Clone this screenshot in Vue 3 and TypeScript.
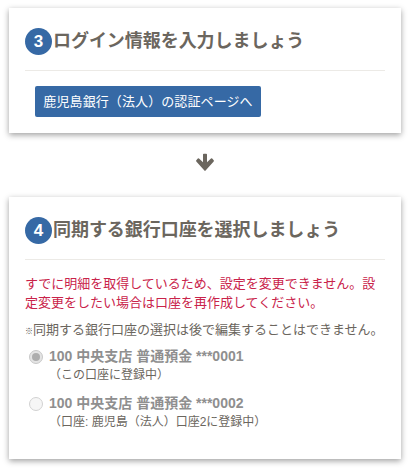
<script setup lang="ts">
interface Account { id: string; label: string; note: string; checked: boolean }
const accounts: Account[] = [
  { id: 'a1', label: '100 中央支店 普通預金 ***0001', note: '（この口座に登録中）', checked: true },
  { id: 'a2', label: '100 中央支店 普通預金 ***0002', note: '（口座: 鹿児島（法人）口座2に登録中）', checked: false },
]
</script>

<template>
  <div class="page">
    <section class="card card-top">
      <h2 class="head"><span class="num">3</span>ログイン情報を入力しましょう</h2>
      <a class="btn">鹿児島銀行（法人）の認証ページへ</a>
    </section>

    <div class="arrow">
      <svg width="20" height="20" viewBox="0 0 20 20">
        <path d="M8 1.6 Q8 .8 8.8 .8 H11.2 Q12 .8 12 1.6 V9.2 L16 5.6 Q16.6 5.1 17.2 5.6 L18.7 7.3 Q19.2 7.9 18.7 8.5 L10.6 17.6 Q10 18.2 9.4 17.6 L1.3 8.5 Q.8 7.9 1.3 7.3 L2.8 5.6 Q3.4 5.1 4 5.6 L8 9.2 Z" fill="#6b665e" />
      </svg>
    </div>

    <section class="card card-bottom">
      <h2 class="head"><span class="num">4</span>同期する銀行口座を選択しましょう</h2>
      <p class="err">すでに明細を取得しているため、設定を変更できません。設定変更をしたい場合は口座を再作成してください。</p>
      <p class="note"><span class="mark">※</span>同期する銀行口座の選択は後で編集することはできません。</p>
      <ul class="list">
        <li v-for="a in accounts" :key="a.id" class="item">
          <span class="radio" :class="{ on: a.checked }"></span>
          <div>
            <div class="label">{{ a.label }}</div>
            <div class="sub">{{ a.note }}</div>
          </div>
        </li>
      </ul>
    </section>
  </div>
</template>

<style>
html, body { margin: 0; background: #fff; }
</style>

<style scoped>
.page {
  width: 410px;
  height: 476px;
  padding: 8px 9px 0;
  box-sizing: border-box;
  overflow: hidden;
  font-family: "Liberation Sans", "Noto Sans CJK JP", sans-serif;
}
.card {
  background: #fff;
  box-shadow: 0 2px 6px rgba(0, 0, 0, 0.38);
  padding: 20px 16px 0;
  box-sizing: border-box;
  width: 392px;
}
.card-top { height: 125px; }
.card-bottom { height: 262px; }
.head {
  display: flex;
  align-items: center;
  margin: 0;
  height: 27px;
  padding-bottom: 15px;
  box-sizing: content-box;
  border-bottom: 1px solid #eceae6;
  font-size: 18px;
  font-weight: 700;
  line-height: 25px;
  color: #6b665e;
  letter-spacing: -0.05px;
  white-space: nowrap;
}
.num {
  flex: none;
  width: 27px;
  height: 27px;
  border-radius: 50%;
  background: #3669a5;
  color: #fff;
  display: flex;
  align-items: center;
  justify-content: center;
  font-size: 17px;
  letter-spacing: 0;
  margin-right: 1px;
}
.btn {
  display: inline-block;
  margin: 15px 0 0 10px;
  width: 226px;
  height: 31px;
  line-height: 31px;
  box-sizing: border-box;
  text-align: center;
  background: #3669a5;
  color: #fff;
  border-radius: 2px;
  font-size: 13px;
  letter-spacing: 0.1px;
  white-space: nowrap;
}
.arrow {
  height: 64px;
  display: flex;
  align-items: flex-start;
  justify-content: center;
  padding-top: 20px;
  box-sizing: border-box;
}
.err {
  margin: 14px 0 0;
  font-size: 13px;
  line-height: 19px;
  color: #c9234a;
}
.note {
  margin: 8px 0 0;
  font-size: 13px;
  line-height: 19px;
  color: #6b665e;
  white-space: nowrap;
}
.mark { font-size: 8px; font-weight: 700; color: #4f4b45; }
.list { list-style: none; margin: 6px 0 0; padding: 0; }
.item {
  display: flex;
  gap: 6px;
  padding-left: 4px;
  margin-bottom: 10px;
}
.radio {
  flex: none;
  width: 14px;
  height: 14px;
  margin-top: 3px;
  border-radius: 50%;
  box-sizing: border-box;
  border: 1px solid #d2d2d2;
  background: #f6f6f6;
  position: relative;
}
.radio.on { background: #e4e4e4; border-color: #c8c8c8; }
.radio.on::after {
  content: "";
  position: absolute;
  inset: 2px;
  border-radius: 50%;
  background: #adadad;
}
.label {
  font-size: 14px;
  line-height: 19px;
  font-weight: 700;
  color: #8f8f8f;
  white-space: nowrap;
}
.sub {
  font-size: 12px;
  line-height: 18px;
  color: #6b665e;
  white-space: nowrap;
}
</style>
